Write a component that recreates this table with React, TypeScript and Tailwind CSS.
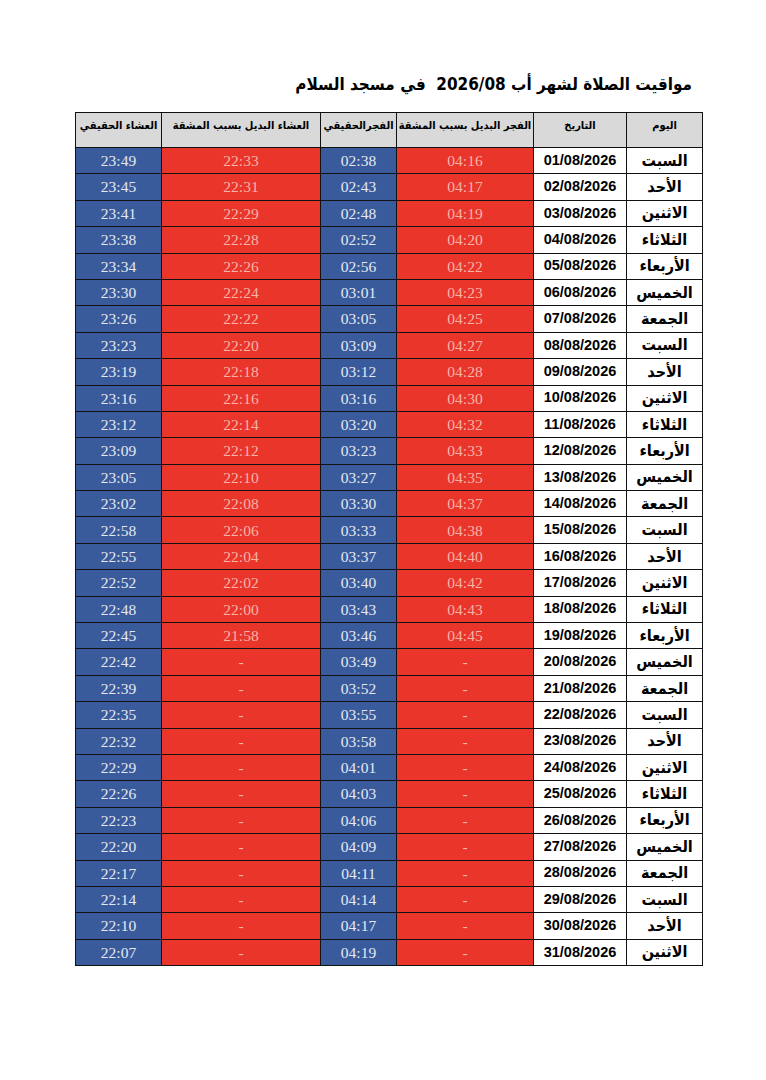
import React from 'react';

const dayNames = ['السبت', 'الأحد', 'الاثنين', 'الثلاثاء', 'الأربعاء', 'الخميس', 'الجمعة'];

// [fajr alt, fajr real, isha alt, isha real]
const times: [string, string, string, string][] = [
  ['04:16', '02:38', '22:33', '23:49'],
  ['04:17', '02:43', '22:31', '23:45'],
  ['04:19', '02:48', '22:29', '23:41'],
  ['04:20', '02:52', '22:28', '23:38'],
  ['04:22', '02:56', '22:26', '23:34'],
  ['04:23', '03:01', '22:24', '23:30'],
  ['04:25', '03:05', '22:22', '23:26'],
  ['04:27', '03:09', '22:20', '23:23'],
  ['04:28', '03:12', '22:18', '23:19'],
  ['04:30', '03:16', '22:16', '23:16'],
  ['04:32', '03:20', '22:14', '23:12'],
  ['04:33', '03:23', '22:12', '23:09'],
  ['04:35', '03:27', '22:10', '23:05'],
  ['04:37', '03:30', '22:08', '23:02'],
  ['04:38', '03:33', '22:06', '22:58'],
  ['04:40', '03:37', '22:04', '22:55'],
  ['04:42', '03:40', '22:02', '22:52'],
  ['04:43', '03:43', '22:00', '22:48'],
  ['04:45', '03:46', '21:58', '22:45'],
  ['-', '03:49', '-', '22:42'],
  ['-', '03:52', '-', '22:39'],
  ['-', '03:55', '-', '22:35'],
  ['-', '03:58', '-', '22:32'],
  ['-', '04:01', '-', '22:29'],
  ['-', '04:03', '-', '22:26'],
  ['-', '04:06', '-', '22:23'],
  ['-', '04:09', '-', '22:20'],
  ['-', '04:11', '-', '22:17'],
  ['-', '04:14', '-', '22:14'],
  ['-', '04:17', '-', '22:10'],
  ['-', '04:19', '-', '22:07'],
];

const headers = [
  'اليوم',
  'التاريخ',
  'الفجر البديل بسبب المشقة',
  'الفجرالحقيقي',
  'العشاء البديل بسبب المشقة',
  'العشاء الحقيقي',
];

const arabic = "font-['DejaVu_Sans_Condensed','DejaVu_Sans',sans-serif]";
const timeCell = "h-[25.4px] text-[15.5px] flex items-center justify-center font-['Liberation_Serif',serif]";

export default function App() {
  return (
    <div className="w-[766px] h-[1080px] bg-white" dir="rtl">
      {/* Title */}
      <div className="pt-[70px] pr-[74px] h-[112px]">
        <h1 className={`${arabic} text-[17px] font-bold text-black leading-[28px]`}>
          مواقيت الصلاة لشهر أب 2026/08&nbsp;&nbsp;في مسجد السلام
        </h1>
      </div>

      {/* Table */}
      <div className="mr-[63px] w-[628px] bg-[#111] p-px grid grid-cols-[75px_92px_136px_75px_158px_85px] gap-px">
        {headers.map(h => (
          <div
            key={h}
            className={`${arabic} h-[34px] bg-[#d9d9d9] text-[11px] font-bold text-black flex justify-center pt-[5px] whitespace-nowrap overflow-hidden`}
          >
            {h}
          </div>
        ))}

        {times.map((t, i) => {
          const day = String(i + 1).padStart(2, '0');
          return (
            <React.Fragment key={i}>
              <div className={`${arabic} h-[25.4px] bg-white text-[16px] font-bold text-black flex items-center justify-center`}>
                {dayNames[i % 7]}
              </div>
              <div className="h-[25.4px] bg-white text-[14.5px] font-bold text-black flex items-center justify-center font-['Liberation_Sans',Arial,sans-serif]">
                {day}/08/2026
              </div>
              <div className={`${timeCell} bg-[#e9352a] text-[#f7b3a9]`}>{t[0]}</div>
              <div className={`${timeCell} bg-[#3a5b9b] text-[#e4e9f3]`}>{t[1]}</div>
              <div className={`${timeCell} bg-[#e9352a] text-[#f7b3a9]`}>{t[2]}</div>
              <div className={`${timeCell} bg-[#3a5b9b] text-[#e4e9f3]`}>{t[3]}</div>
            </React.Fragment>
          );
        })}
      </div>
    </div>
  );
}
